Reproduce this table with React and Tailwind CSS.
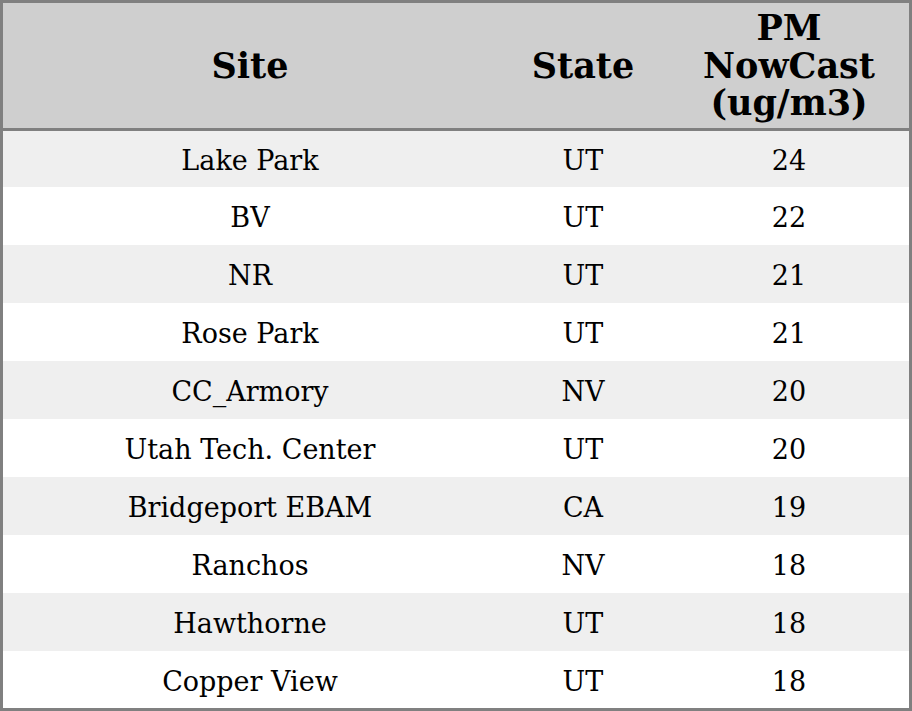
import React from "react";

const rows = [
  ["Lake Park", "UT", "24"],
  ["BV", "UT", "22"],
  ["NR", "UT", "21"],
  ["Rose Park", "UT", "21"],
  ["CC_Armory", "NV", "20"],
  ["Utah Tech. Center", "UT", "20"],
  ["Bridgeport EBAM", "CA", "19"],
  ["Ranchos", "NV", "18"],
  ["Hawthorne", "UT", "18"],
  ["Copper View", "UT", "18"],
];

export default function App() {
  return (
    <div
      className="w-[912px] h-[711px] border-[3px] border-[#808080] flex flex-col text-black bg-white"
      style={{ fontFamily: '"DejaVu Serif", serif' }}
    >
      <div className="h-[128px] shrink-0 bg-[#cfcfcf] border-b-[3px] border-[#808080] flex items-center font-bold text-[35px] leading-[37.5px]">
        <div className="w-[494px] text-center">Site</div>
        <div className="w-[172px] text-center">State</div>
        <div className="flex-1 text-center">
          PM
          <br />
          NowCast
          <br />
          (ug/m3)
        </div>
      </div>
      <div className="flex-1 flex flex-col">
        {rows.map((r, i) => (
          <div
            key={i}
            className={`${i === 0 ? "h-[56px]" : i === rows.length - 1 ? "flex-1" : "h-[58px]"} shrink-0 pt-[5px] flex items-center text-[27px] ${i % 2 === 0 ? "bg-[#efefef]" : "bg-white"}`}
          >
            <div className="w-[494px] text-center">{r[0]}</div>
            <div className="w-[172px] text-center">{r[1]}</div>
            <div className="flex-1 text-center">{r[2]}</div>
          </div>
        ))}
      </div>
    </div>
  );
}
